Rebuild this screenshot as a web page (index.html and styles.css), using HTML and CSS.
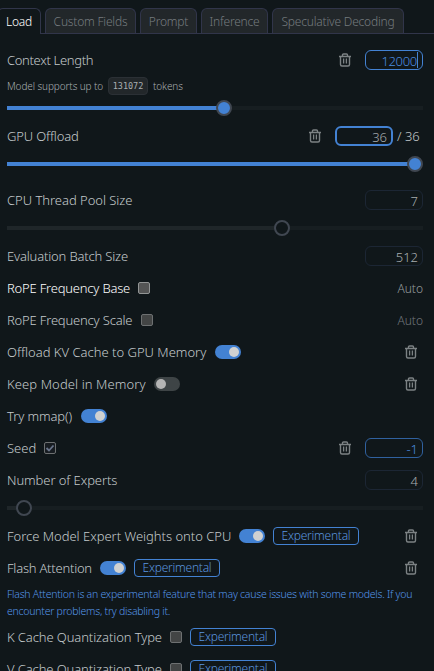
FILE: index.html
```
<!DOCTYPE html>
<html lang="en">
<head>
    <meta charset="UTF-8">
    <meta name="viewport" content="width=device-width, initial-scale=1.0">
    <title>Model Load Settings</title>
    <link rel="stylesheet" href="styles.css">
</head>
<body>
    <svg class="defs" width="0" height="0">
        <symbol id="trash" viewBox="0 0 12 14">
            <path d="M0 3.5H12M3.5 3.5V2Q3.5 1 4.5 1H7.5Q8.5 1 8.5 2V3.5M1.5 3.5V11.5Q1.5 13 3 13H9Q10.5 13 10.5 11.5V3.5" fill="none" stroke="currentColor" stroke-width="1.4"/>
            <path d="M4.6 5.5V10.5M7.4 5.5V10.5" fill="none" stroke="currentColor" stroke-width="1.3"/>
        </symbol>
    </svg>

    <div class="tabs">
        <div class="tab active">Load</div>
        <div class="tab custom">Custom Fields</div>
        <div class="tab prompt">Prompt</div>
        <div class="tab inference">Inference</div>
        <div class="tab speculative">Speculative Decoding</div>
    </div>

    <div class="settings">
        <div class="row">
            <span class="label context">Context Length</span>
            <div class="right"><svg class="trash"><use href="#trash"/></svg><div class="field focus">12000<i class="caret"></i></div></div>
        </div>
        <div class="hint"><span class="up-to">Model supports up to</span><code>131072</code><span class="tokens">tokens</span></div>
        <div class="slider"><div class="fill" style="width: 217px"></div><div class="thumb on"></div></div>

        <div class="row">
            <span class="label gpu">GPU Offload</span>
            <div class="right"><svg class="trash"><use href="#trash"/></svg><div class="field ring">36</div><span class="max">/ 36</span></div>
        </div>
        <div class="slider last"><div class="fill" style="width: 408px"></div><div class="thumb on"></div></div>

        <div class="row">
            <span class="label threads">CPU Thread Pool Size</span>
            <div class="right"><div class="field">7</div></div>
        </div>
        <div class="slider"><div class="fill dim" style="width: 275px"></div><div class="thumb"></div></div>

        <div class="row">
            <span class="label batch">Evaluation Batch Size</span>
            <div class="right"><div class="field">512</div></div>
        </div>
        <div class="row">
            <span class="label rope-base">RoPE Frequency Base</span><span class="check light"></span>
            <div class="right"><span class="auto">Auto</span></div>
        </div>
        <div class="row">
            <span class="label rope-scale">RoPE Frequency Scale</span><span class="check"></span>
            <div class="right"><span class="auto dim">Auto</span></div>
        </div>
        <div class="row">
            <span class="label kv">Offload KV Cache to GPU Memory</span><span class="toggle on"></span>
            <div class="right"><svg class="trash edge"><use href="#trash"/></svg></div>
        </div>
        <div class="row">
            <span class="label keep">Keep Model in Memory</span><span class="toggle"></span>
            <div class="right"><svg class="trash edge"><use href="#trash"/></svg></div>
        </div>
        <div class="row">
            <span class="label mmap">Try mmap()</span><span class="toggle on"></span>
        </div>
        <div class="row">
            <span class="label seed">Seed</span>
            <span class="check checked"><svg viewBox="0 0 10 10"><path d="M1.5 5L4 7.5L8.5 2.5"/></svg></span>
            <div class="right"><svg class="trash"><use href="#trash"/></svg><div class="field set">-1</div></div>
        </div>
        <div class="row">
            <span class="label experts">Number of Experts</span>
            <div class="right"><div class="field">4</div></div>
        </div>
        <div class="slider"><div class="fill dim" style="width: 17px"></div><div class="thumb"></div></div>

        <div class="row">
            <span class="label force">Force Model Expert Weights onto CPU</span><span class="toggle on"></span><span class="badge">Experimental</span>
            <div class="right"><svg class="trash edge"><use href="#trash"/></svg></div>
        </div>
        <div class="row">
            <span class="label flash">Flash Attention</span><span class="toggle on"></span><span class="badge">Experimental</span>
            <div class="right"><svg class="trash edge"><use href="#trash"/></svg></div>
        </div>
        <p class="note">Flash Attention is an experimental feature that may cause issues with some models. If you<br>encounter problems, try disabling it.</p>
        <div class="row">
            <span class="label kcache">K Cache Quantization Type</span><span class="check"></span><span class="badge">Experimental</span>
        </div>
        <div class="row">
            <span class="label kcache">V Cache Quantization Type</span><span class="check"></span><span class="badge">Experimental</span>
        </div>
    </div>
</body>
</html>
```
FILE: styles.css
```
* {
    box-sizing: border-box;
}
body {
    margin: 0;
    height: 671px;
    overflow: hidden;
    background-color: #10171a;
    color: #c4cacc;
    font-family: "Noto Sans", sans-serif;
    font-size: 13px;
    font-weight: 300;
    white-space: nowrap;
}
.defs {
    display: block;
}
.tabs {
    display: flex;
    gap: 4px;
    height: 34px;
    padding-top: 8px;
    border-bottom: 1px solid #31354a;
}
.tab {
    height: 25px;
    border: 1px solid #31354a;
    border-bottom: none;
    border-radius: 6px 6px 0 0;
    background-color: #22272a;
    color: #757b7f;
    font-size: 12px;
    letter-spacing: -0.2px;
    line-height: 25px;
    text-align: center;
}
.tab.active {
    width: 44px;
    height: 26px;
    margin-left: -3px;
    background-color: #10171a;
    color: #fff;
}
.tab.custom { width: 91px; }
.tab.prompt { width: 57px; }
.tab.inference { width: 67px; }
.tab.speculative { width: 132px; }

.settings {
    padding: 10px 11px 0 7px;
}
.row {
    display: flex;
    align-items: center;
    gap: 8px;
    height: 32px;
}
.label {
    line-height: 18px;
}
.context { width: 87px; letter-spacing: -0.33px; }
.gpu { width: 72px; letter-spacing: -0.15px; }
.threads { width: 126px; letter-spacing: -0.03px; }
.batch { width: 121px; letter-spacing: -0.17px; }
.rope-base { width: 123px; letter-spacing: -0.2px; color: #fff; }
.rope-scale { width: 126px; letter-spacing: -0.18px; }
.kv { width: 200px; }
.keep { width: 139px; letter-spacing: 0.1px; }
.mmap { width: 66px; letter-spacing: -0.1px; }
.seed { width: 29px; }
.experts { width: 111px; letter-spacing: -0.08px; }
.force { width: 224px; letter-spacing: -0.02px; }
.flash { width: 85px; letter-spacing: -0.23px; }
.kcache { width: 155px; letter-spacing: -0.1px; }

.right {
    display: flex;
    align-items: center;
    margin-left: auto;
}
.trash {
    width: 12px;
    height: 14px;
    margin-right: 14px;
    color: #7c8284;
}
.trash.edge {
    margin-right: 6px;
}
.field {
    display: flex;
    justify-content: flex-end;
    width: 58px;
    height: 20px;
    padding: 1px 4px 0 0;
    border: 1px solid #1c2634;
    border-radius: 6px;
    color: #a8aeb0;
    line-height: 18px;
}
.field.focus {
    border-color: #4382d3;
    color: #4c8de0;
    letter-spacing: -0.3px;
}
.field.set {
    border-color: #30619f;
    color: #4c8de0;
}
.field.ring {
    padding: 0 4px 0 0;
    border: 2px solid #4382d3;
}
.caret {
    width: 1px;
    height: 16px;
    background-color: #4382d3;
}
.max {
    width: 26px;
    margin-left: 4px;
}
.auto {
    color: #969c9e;
    font-size: 12px;
}
.auto.dim {
    color: #70767a;
}
.hint {
    display: flex;
    align-items: center;
    height: 20px;
    color: #a8aeb0;
    font-size: 10px;
    letter-spacing: -0.1px;
}
.up-to { width: 96px; }
.hint code {
    width: 40px;
    height: 18px;
    margin: 0 5px;
    border: 1px solid #2b3035;
    border-radius: 4px;
    background-color: #22272a;
    font-family: "DejaVu Sans Mono", monospace;
    font-size: 8.5px;
    letter-spacing: 0;
    line-height: 16px;
    text-align: center;
}
.slider {
    display: flex;
    align-items: center;
    height: 24px;
    background: linear-gradient(#171e21, #171e21) center / 100% 4px no-repeat;
}
.slider.last {
    margin-bottom: 8px;
}
.fill {
    height: 4px;
    background-color: #4382d3;
}
.fill.dim {
    background-color: #1f2629;
}
.thumb {
    width: 16px;
    height: 16px;
    margin-left: -8px;
    border: 2px solid #404751;
    border-radius: 50%;
    background-color: #10171a;
}
.thumb.on {
    background-color: #4382d3;
}
.check {
    width: 12px;
    height: 12px;
    border: 1px solid #6d7071;
    border-radius: 2px;
    background-color: #434545;
}
.check.light {
    border-color: #929595;
    background-color: #545555;
}
.check.checked {
    background-color: #171c21;
}
.check svg {
    display: block;
    width: 10px;
    height: 10px;
}
.check path {
    fill: none;
    stroke: #69748a;
    stroke-width: 1.8;
}
.toggle {
    display: flex;
    width: 26px;
    height: 14px;
    padding: 2px;
    border-radius: 7px;
    background-color: #3e4446;
}
.toggle::after {
    content: "";
    width: 10px;
    height: 10px;
    border-radius: 50%;
    background-color: #b5b5b5;
}
.toggle.on {
    justify-content: flex-end;
    background-color: #4382d3;
}
.toggle.on::after {
    background-color: #d0d1d1;
}
.badge {
    width: 86px;
    height: 18px;
    border: 1px solid #4382d3;
    border-radius: 4px;
    color: #5a94df;
    font-size: 12px;
    letter-spacing: -0.25px;
    line-height: 16px;
    text-align: center;
}
.note {
    height: 37px;
    margin: 0;
    padding-top: 2px;
    color: #5596e8;
    font-size: 10.5px;
    letter-spacing: -0.24px;
    line-height: 17px;
}
```
